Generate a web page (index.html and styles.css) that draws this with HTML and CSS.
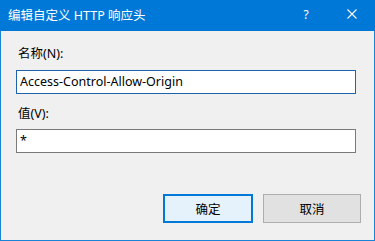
FILE: index.html
```html
<!DOCTYPE html>
<html lang="zh-CN">
<head>
<meta charset="utf-8">
<title>编辑自定义 HTTP 响应头</title>
<link rel="stylesheet" href="styles.css">
</head>
<body>
<div class="window">
  <div class="titlebar">
    <div class="title">编辑自定义 HTTP 响应头</div>
    <div class="tbtn help">?</div>
    <div class="tbtn close">
      <svg width="10" height="10" viewBox="0 0 10 10"><path d="M0.5 0.5 L9.5 9.5 M9.5 0.5 L0.5 9.5" stroke="#fff" stroke-width="1.1" fill="none"/></svg>
    </div>
  </div>
  <div class="content">
    <div class="label">名称(N):</div>
    <div class="field focused">Access-Control-Allow-Origin</div>
    <div class="label label2">值(V):</div>
    <div class="field">*</div>
    <div class="buttons">
      <div class="btn default">确定</div>
      <div class="btn cancel">取消</div>
    </div>
  </div>
</div>
</body>
</html>
```

FILE: styles.css
```css
html, body {
  margin: 0;
  padding: 0;
  background: #f0f0f0;
}
body {
  font-family: "Noto Sans", "Noto Sans CJK SC", sans-serif;
  font-size: 12.5px;
  color: #000;
}
.window {
  box-sizing: border-box;
  width: 375px;
  height: 241px;
  border: 1px solid #1883d7;
  border-top: 0;
  background: #f0f0f0;
  display: flex;
  flex-direction: column;
}
.titlebar {
  height: 31px;
  margin: 0 -1px;
  background: #0078d7;
  color: #fff;
  display: flex;
  align-items: center;
}
.title {
  flex: 1;
  padding-left: 8px;
  font-size: 12.5px;
  padding-bottom: 3px;
}
.tbtn {
  width: 46px;
  height: 31px;
  display: flex;
  align-items: center;
  justify-content: center;
}
.help {
  font-size: 12px;
  font-weight: normal;
  padding-bottom: 3px;
  box-sizing: border-box;
}
.close svg {
  margin-top: -3px;
}
.content {
  flex: 1;
  display: flex;
  flex-direction: column;
  padding: 15px 18px 17px 15px;
}
.label {
  height: 16px;
  line-height: 16px;
  padding-left: 2px;
  margin-bottom: 8px;
}
.label2 {
  margin-top: 12px;
  margin-bottom: 7px;
}
.field {
  box-sizing: border-box;
  height: 24px;
  border: 1px solid #7a7a7a;
  background: #fff;
  padding-left: 3px;
  line-height: 21px;
}
.field.focused {
  border-color: #1d63ad;
}
.buttons {
  margin-top: auto;
  margin-right: -5px;
  display: flex;
  justify-content: flex-end;
  gap: 10px;
}
.btn {
  box-sizing: border-box;
  height: 29px;
  display: flex;
  align-items: center;
  justify-content: center;
  background: #e1e1e1;
  border: 1px solid #adadad;
  padding-bottom: 1px;
}
.btn.default {
  width: 90px;
  border: 2px solid #0078d7;
  background: #e5f1fb;
}
.btn.cancel {
  width: 98px;
}
```
